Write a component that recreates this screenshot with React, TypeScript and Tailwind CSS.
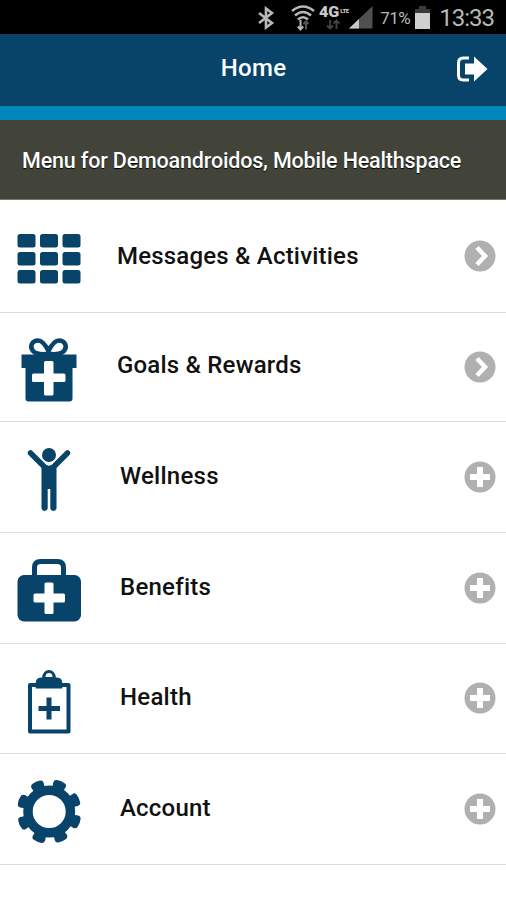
import React from 'react';
import clsx from 'clsx';

interface MenuItem {
    label: string;
    icon: React.ReactNode;
    expandable: boolean;
    rowClass: string;
    labelClass: string;
    badgeClass?: string;
}

const GEAR_TEETH = [21, 66, 111, 156, 201, 246, 291, 336];

function GridIcon() {
    return (
        <svg viewBox="0 0 64 64" className="w-16 h-16 fill-current">
            {[7, 25, 43].map(y =>
                [0.5, 23, 45.5].map(x => (
                    <rect key={`${x}-${y}`} x={x} y={y} width="18" height="13.5" rx="2.5" />
                ))
            )}
        </svg>
    );
}

function GiftIcon() {
    return (
        <svg viewBox="0 0 64 64" className="w-16 h-16 fill-current">
            <path
                d="M31.5 16C27 16 20 17.500 16 13C12 8 15.500 2.500 21 2.500C26 2.500 29.500 9 31.500 13C33.500 9 37 2.500 42 2.500C47.500 2.500 51 8 47 13C43 17.500 36 16 31.500 16Z"
                fill="none"
                stroke="currentColor"
                strokeWidth="4.5"
                strokeLinejoin="round"
            />
            <path d="M4.500 16.500H59.500V30H55.500V60.500Q55.500 63.500 52.500 63.500H11.500Q8.500 63.500 8.500 60.500V30H4.500Z" />
            <path
                d="M28.500 23H35Q36.500 23 36.500 24.500V35.500H47Q48.500 35.500 48.500 37V42.500Q48.500 44 47 44H36.500V56Q36.500 57.500 35 57.500H28.500Q27 57.500 27 56V44H16.500Q15 44 15 42.500V37Q15 35.500 16.500 35.500H27V24.500Q27 23 28.500 23Z"
                fill="#fff"
            />
        </svg>
    );
}

function PersonIcon() {
    return (
        <svg viewBox="0 0 64 64" className="w-16 h-16 fill-current">
            <circle cx="32" cy="7" r="7" />
            <path
                d="M13.500 5L27 18.500M50.500 5L37 18.500"
                fill="none"
                stroke="currentColor"
                strokeWidth="5.5"
                strokeLinecap="round"
            />
            <path d="M24.500 16.500L26.500 15Q32 20.500 37.500 15L39.500 16.500V60.500A3.200 3.200 0 0 1 33.300 60.500V41H30.700V60.500A3.200 3.200 0 0 1 24.500 60.500Z" />
        </svg>
    );
}

function BriefcaseIcon() {
    return (
        <svg viewBox="0 0 64 64" className="w-16 h-16 fill-current">
            <path
                d="M17.500 18V8.500Q17.500 2.500 23.500 2.500H40.500Q46.500 2.500 46.500 8.500V18"
                fill="none"
                stroke="currentColor"
                strokeWidth="5"
            />
            <rect x="0.500" y="16" width="63.500" height="46.500" rx="6.500" />
            <rect x="27.500" y="23.500" width="9" height="31.500" rx="1.500" fill="#fff" />
            <rect x="16.500" y="34.500" width="31.500" height="9" rx="1.500" fill="#fff" />
        </svg>
    );
}

function ClipboardIcon() {
    return (
        <svg viewBox="0 0 64 64" className="w-16 h-16 fill-current overflow-visible">
            <rect x="13" y="15" width="38.500" height="46.500" fill="none" stroke="currentColor" strokeWidth="4" strokeLinejoin="round" />
            <path d="M18.700 18.500V13.500Q18.700 7.500 24 7.500H25.200A6.800 7.500 0 0 1 38.800 7.500H40Q45.300 7.500 45.300 13.500V18.500Z" />
            <path d="M28.500 7A3.500 4 0 0 1 35.500 7Z" fill="#fff" />
            <rect x="29.500" y="27.500" width="5" height="22" />
            <rect x="21.500" y="36" width="21.500" height="5" />
        </svg>
    );
}

function GearIcon() {
    return (
        <svg viewBox="0 0 64 64" className="w-16 h-16 fill-current overflow-visible">
            {GEAR_TEETH.map(angle => (
                <path
                    key={angle}
                    transform={`rotate(${angle} 32.200 31.500)`}
                    d="M23 11L26.500 7.500L25.600 3Q25.300 0.200 28 -0.500Q32.200 -1.600 36.400 -0.500Q39.100 0.200 38.800 3L37.900 7.500L41.400 11Z"
                />
            ))}
            <circle cx="32.200" cy="31.500" r="21.250" fill="none" stroke="currentColor" strokeWidth="9.500" />
        </svg>
    );
}

const MENU_ITEMS: MenuItem[] = [
    { label: 'Messages & Activities', icon: <GridIcon />, expandable: false, rowClass: 'h-[113px]', labelClass: 'pl-9 tracking-[0.2px]' },
    { label: 'Goals & Rewards', icon: <GiftIcon />, expandable: false, rowClass: 'h-[109px]', labelClass: 'pl-9 pb-[4px] tracking-[0.2px]', badgeClass: 'mb-px' },
    { label: 'Wellness', icon: <PersonIcon />, expandable: true, rowClass: 'h-[111px]', labelClass: 'pl-[39px] pb-[2px] tracking-[0.25px]' },
    { label: 'Benefits', icon: <BriefcaseIcon />, expandable: true, rowClass: 'h-[111px]', labelClass: 'pl-[39px] pb-[2px] tracking-[0.25px]' },
    { label: 'Health', icon: <ClipboardIcon />, expandable: true, rowClass: 'h-[110px]', labelClass: 'pl-[39px] pb-[3px] tracking-[0.25px]', badgeClass: 'mb-px' },
    { label: 'Account', icon: <GearIcon />, expandable: true, rowClass: 'h-[111px]', labelClass: 'pl-[39px] pb-[2px] tracking-[0.2px]' },
];

function StatusBar() {
    return (
        <div className="h-[34px] bg-black flex items-center justify-end pr-[12px] pt-px text-[#b8b8b8]">
            {/* Bluetooth */}
            <svg viewBox="0 0 18 24" className="w-[18px] h-6 mr-[16px]" fill="none" stroke="currentColor" strokeWidth="2.600">
                <path d="M2 7L15 17L9 21.500V2.500L15 7L2 17" />
            </svg>
            {/* Wifi */}
            <svg viewBox="0 0 24 26" className="w-6 h-[26px] mr-[4px]" fill="none" stroke="currentColor" strokeWidth="2.600">
                <path d="M1 6Q12 -3 23 6M4 10.500Q12 3.500 20 10.500M7 14.500Q12 10 17 14.500" />
                <path d="M9.500 15V24M6.800 21.500L9.500 24.500L12.200 21.500" strokeWidth="2" />
                <path d="M15 24.500V17M12.500 19L15 16.500L17.500 19" stroke="#555" strokeWidth="2" />
            </svg>
            {/* Network type */}
            <div className="w-[27px] h-[26px] mr-[3px] flex flex-col items-center">
                <div className="flex items-start self-start h-[14px] font-black leading-[14px] text-[#c8c8c8]">
                    <span className="text-[14px] w-[21px] origin-left scale-x-115">4G</span>
                    <span className="text-[6px] leading-[6px] pt-[3px] tracking-[-0.5px]">LTE</span>
                </div>
                <svg viewBox="0 0 14 11" className="w-[14px] h-[11px]" fill="none" stroke="#444" strokeWidth="1.800">
                    <path d="M4 1V9M1 6.500L4 9.500L7 6.500M10.500 10V2M7.500 4.500L10.500 1.500L13.500 4.500" />
                </svg>
            </div>
            {/* Signal */}
            <svg viewBox="0 0 24 23" className="w-6 h-[23px] mr-[7px]">
                <path d="M0 22.500L23.500 0V22.500Z" fill="#505050" />
                <path d="M0 22.500L10 13V22.500Z" fill="#c8c8c8" />
            </svg>
            <span className="text-[17px] leading-none tracking-[-0.5px] w-[32px] mr-[3px] pt-px whitespace-nowrap">71%</span>
            {/* Battery */}
            <svg viewBox="0 0 15 23" className="w-[15px] h-[23px] mr-[9px]">
                <path d="M4 0H11V3H15V8H0V3H4Z" fill="#3b3b3b" />
                <rect y="7" width="15" height="16" fill="#d0d0d0" />
            </svg>
            <span className="text-[24px] leading-none tracking-[-1px] whitespace-nowrap">13:33</span>
        </div>
    );
}

export default function App() {
    return (
        <div className="w-[506px] h-[900px] bg-white overflow-hidden font-['Roboto','Liberation_Sans',sans-serif]">
            <StatusBar />

            {/* Header */}
            <header className="h-[86px] bg-[#084369] border-b-[14px] border-[#0086bb] grid grid-cols-[1fr_auto_1fr] items-center">
                <h1 className="col-start-2 text-white text-[24px] leading-none font-medium tracking-[0.3px] pl-px pb-[4px]">Home</h1>
                <button className="justify-self-end mr-[18px] pb-[2px]" aria-label="Log out">
                    <svg viewBox="0 0 32 26" className="w-8 h-[26px]">
                        <path d="M13 2H7Q2.500 2 2.500 7V19Q2.500 24 7 24H13" fill="none" stroke="#fff" strokeWidth="3" />
                        <path d="M9 7.500H18V0.500L31.500 13L18 25.500V18.500H9Z" fill="#fff" />
                    </svg>
                </button>
            </header>

            <div className="h-20 bg-[#42443a] border-b border-[#77786f] flex items-center pl-[22px]">
                <h2 className="text-white text-[21.500px] leading-none font-medium tracking-[-0.170px] pt-[2px] whitespace-nowrap [text-shadow:0_1px_1px_#000]">
                    Menu for Demoandroidos, Mobile Healthspace
                </h2>
            </div>

            {/* Menu */}
            <ul>
                {MENU_ITEMS.map(item => (
                    <li key={item.label} className={clsx('flex items-center pl-[17px] pr-[10px] border-b border-[#dedede]', item.rowClass)}>
                        <span className="text-[#084369] pt-[6px]">{item.icon}</span>
                        <span className={clsx('flex-1 text-[24px] leading-none font-medium text-[#111]', item.labelClass)}>
                            {item.label}
                        </span>
                        <svg viewBox="0 0 32 32" className={clsx('w-8 h-8', item.badgeClass)}>
                            <circle cx="16" cy="16" r="15.500" fill="#b0b0b0" />
                            {item.expandable ? (
                                <path d="M16 6V26M6 16H26" stroke="#fff" strokeWidth="6" />
                            ) : (
                                <path d="M13 7.500L21 16L13 24.500" fill="none" stroke="#fff" strokeWidth="4.500" />
                            )}
                        </svg>
                    </li>
                ))}
            </ul>
        </div>
    );
}
